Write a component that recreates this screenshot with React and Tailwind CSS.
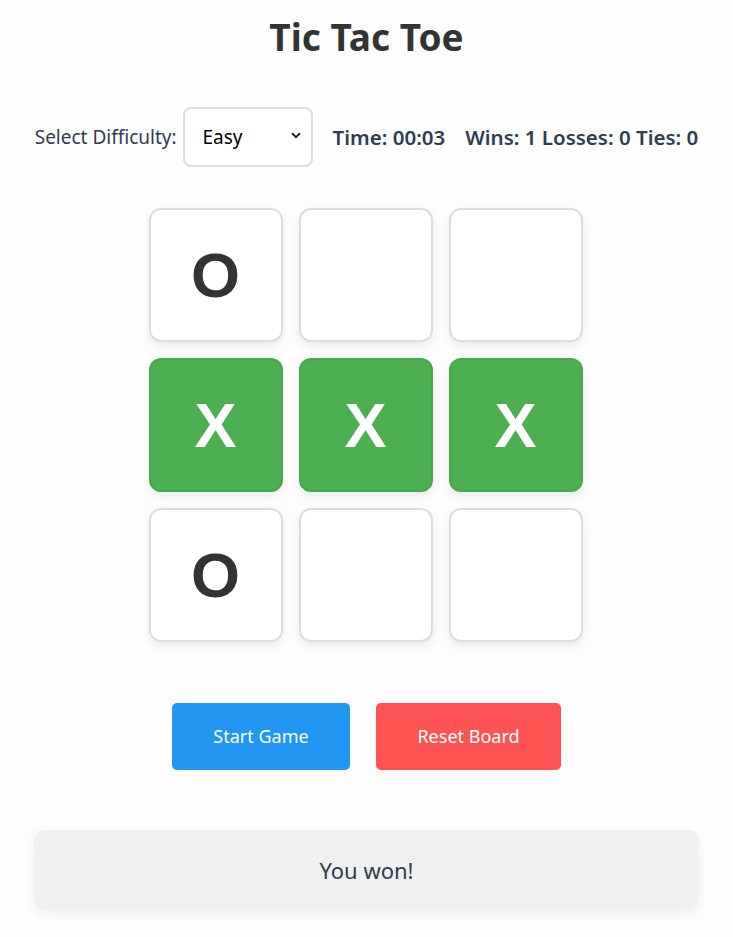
import React from 'react';

const board = ['O', '', '', 'X', 'X', 'X', 'O', '', ''];
const winLine = [3, 4, 5];

const Cell = ({ value, win }) => (
  <div
    className={`w-[134px] h-[134px] rounded-[12px] border-2 flex items-center justify-center text-[63px] font-bold shadow-[0_4px_10px_rgba(0,0,0,0.08)] ${
      win ? 'bg-[#4caf50] border-[#46a84a] text-white' : 'bg-white border-[#dddddd] text-[#333333]'
    }`}
    style={{ fontFamily: '"Liberation Sans", Arial, sans-serif' }}
  >
    {value}
  </div>
);

export default function App() {
  return (
    <div
      className="min-h-[937px] bg-[#fdfdfd] flex flex-col items-center px-[34px] pt-[12px] text-[#2c3e50]"
      style={{ fontFamily: '"Noto Sans", "Open Sans", sans-serif' }}
    >
      <h1 className="text-[37px] leading-[50px] font-bold text-[#333333]">Tic Tac Toe</h1>

      {/* Controls */}
      <div className="mt-[45px] flex items-center justify-center gap-[20px] w-full">
        <div className="flex items-center gap-[6px]">
          <label className="text-[19px] text-[#2c3e50]">Select Difficulty:</label>
          <div className="relative">
            <select
              defaultValue="easy"
              className="appearance-none w-[130px] h-[60px] rounded-[8px] border-2 border-[#dddddd] bg-white pl-[18px] text-[19px] text-black outline-none"
            >
              <option value="easy">Easy</option>
              <option value="medium">Medium</option>
              <option value="hard">Hard</option>
            </select>
            <svg
              className="absolute right-[12px] top-[25px] pointer-events-none"
              width="10"
              height="7"
              viewBox="0 0 10 7"
              fill="none"
            >
              <polyline points="1,1.2 5,5.2 9,1.2" stroke="#111" strokeWidth="1.8" />
            </svg>
          </div>
        </div>
        <span className="text-[20.5px] font-semibold">Time: 00:03</span>
        <span className="text-[20.5px] font-semibold">Wins: 1 Losses: 0 Ties: 0</span>
      </div>

      {/* Board */}
      <div className="mt-[41px] -ml-[2px] grid grid-cols-3 gap-[16px]">
        {board.map((v, i) => (
          <Cell key={i} value={v} win={winLine.includes(i)} />
        ))}
      </div>

      {/* Buttons */}
      <div className="mt-[61px] flex gap-[26px]">
        <button className="w-[178px] h-[67px] rounded-[5px] bg-[#2196f3] text-white text-[18px]">
          Start Game
        </button>
        <button className="w-[185px] h-[67px] rounded-[5px] bg-[#ff5252] text-white text-[18px]">
          Reset Board
        </button>
      </div>

      {/* Message */}
      <div className="mt-[60px] w-full h-[80px] rounded-[10px] bg-[#f0f0f0] shadow-[0_4px_12px_rgba(0,0,0,0.06)] flex items-center justify-center text-[22px] text-[#2c3e50]">
        You won!
      </div>
    </div>
  );
}
